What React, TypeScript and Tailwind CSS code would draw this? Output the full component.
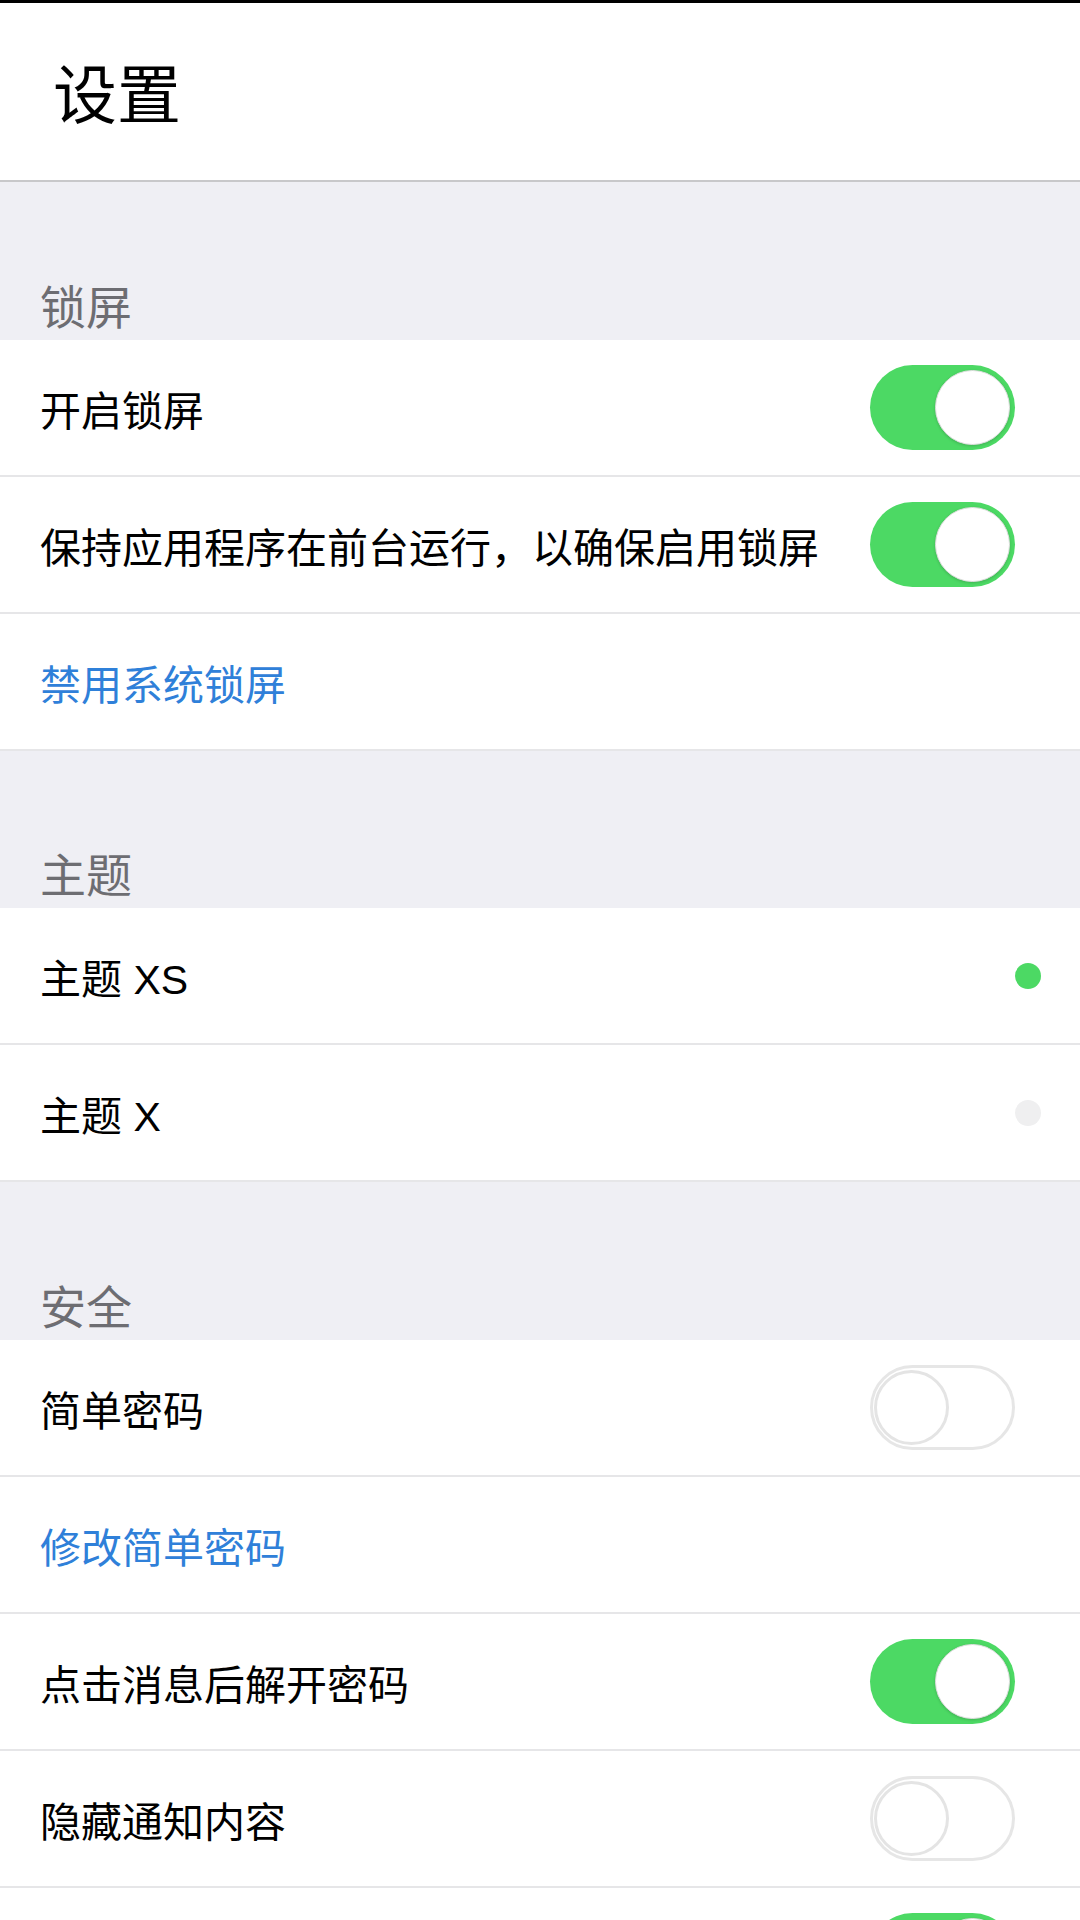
import React from "react";

const font = { fontFamily: '"Liberation Sans", "Noto Sans CJK SC", sans-serif' };

function ToggleOn() {
  return (
    <div className="w-[145px] h-[85px] rounded-full bg-[#4cd964] flex items-center justify-end pr-[5px] shrink-0">
      <div className="w-[75px] h-[75px] rounded-full bg-white border border-[#dedede] shadow-[0_1px_3px_rgba(0,0,0,0.18)]" />
    </div>
  );
}

function ToggleOff() {
  return (
    <div className="w-[145px] h-[85px] rounded-full bg-white border-[3px] border-[#e6e6e6] flex items-center justify-start pl-[1px] shrink-0">
      <div className="w-[75px] h-[75px] rounded-full bg-white border-[3px] border-[#e4e4e4]" />
    </div>
  );
}

function SectionHeader({ title, h }: { title: string; h: string }) {
  return (
    <div className={`${h} bg-[#efeff4] flex items-end pl-[40px] pb-[9px]`}>
      <span className="text-[46px] leading-none text-[#6d6d72]">{title}</span>
    </div>
  );
}

function Row({
  label,
  blue,
  right,
}: {
  label: string;
  blue?: boolean;
  right?: React.ReactNode;
}) {
  return (
    <div className="h-[137px] bg-white border-b-2 border-[#e6e6e8] flex items-center justify-between pl-[40px]">
      <span className={`text-[41px] leading-none pt-[9px] ${blue ? "text-[#2f80d9]" : "text-black"}`}>{label}</span>
      {right}
    </div>
  );
}

function SwitchSlot({ on }: { on: boolean }) {
  return <div className="pr-[65px] flex items-center">{on ? <ToggleOn /> : <ToggleOff />}</div>;
}

function Dot({ on }: { on: boolean }) {
  return (
    <div className="pr-[39px] flex items-center">
      <div className={`w-[26px] h-[26px] rounded-full ${on ? "bg-[#4cd964]" : "bg-[#efeff0]"}`} />
    </div>
  );
}

export default function App() {
  return (
    <div className="w-[1080px] h-[1920px] overflow-hidden bg-[#efeff4]" style={font}>
      <div className="h-[3px] bg-black" />
      <div className="h-[177px] bg-white flex items-center pl-[53px] pt-[8px]">
        <span className="text-[64px] leading-none text-black">设置</span>
      </div>
      <div className="h-[2px] bg-[#c8c8ca]" />

      <SectionHeader title="锁屏" h="h-[158px]" />
      <Row label="开启锁屏" right={<SwitchSlot on />} />
      <Row label="保持应用程序在前台运行，以确保启用锁屏" right={<SwitchSlot on />} />
      <Row label="禁用系统锁屏" blue />

      <SectionHeader title="主题" h="h-[157px]" />
      <Row label="主题 XS" right={<Dot on />} />
      <Row label="主题 X" right={<Dot on={false} />} />

      <SectionHeader title="安全" h="h-[158px]" />
      <Row label="简单密码" right={<SwitchSlot on={false} />} />
      <Row label="修改简单密码" blue />
      <Row label="点击消息后解开密码" right={<SwitchSlot on />} />
      <Row label="隐藏通知内容" right={<SwitchSlot on={false} />} />
      <Row label="" right={<SwitchSlot on />} />
    </div>
  );
}
